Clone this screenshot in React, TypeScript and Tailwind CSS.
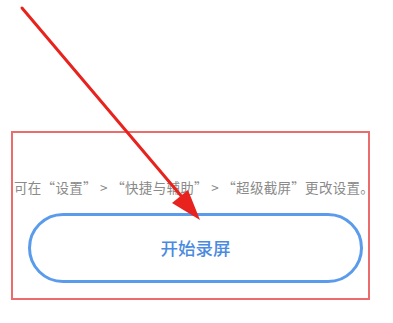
export default function App() {
  const cjk = { fontFamily: '"Noto Sans CJK SC", sans-serif' };
  return (
    <div className="relative w-[393px] h-[323px] bg-white overflow-hidden" style={cjk}>
      {/* highlight box */}
      <div className="ml-[11px] mt-[131px] w-[359px] h-[169px] border-[2.5px] border-[#ec6b6b] flex flex-col">
        <p className="mt-[45px] ml-[1px] whitespace-nowrap text-[13.5px] leading-[18px] tracking-[0.3px] text-[#8a8a8a]">
          可在“设置” &gt; “快捷与辅助” &gt; “超级截屏”更改设置。
        </p>
        <button className="mt-[17px] ml-[15px] w-[335px] h-[70px] rounded-full border-[3px] border-[#5b9bec] bg-white flex items-center justify-center text-[17.5px] font-medium text-[#4a8be0]">
          开始录屏
        </button>
      </div>

      {/* red arrow overlay */}
      <svg className="absolute left-0 top-0" width="393" height="323" viewBox="0 0 393 323">
        <line x1="22" y1="8" x2="188" y2="204" stroke="#e8231e" strokeWidth="3" strokeLinecap="round" />
        <polygon points="200,220 172,203 188,190" fill="#e8231e" />
      </svg>
    </div>
  );
}
